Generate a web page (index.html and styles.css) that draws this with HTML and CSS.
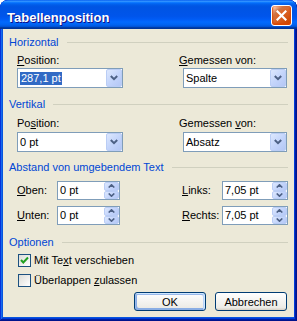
FILE: index.html
```html
<!DOCTYPE html>
<html lang="de">
<head>
<meta charset="UTF-8" />
<title>Tabellenposition</title>
<link rel="stylesheet" href="styles.css">
</head>
<body>
  <div class="window">
    <div class="titlebar">
      <span class="title">Tabellenposition</span>
      <button class="close" aria-label="Schließen">
        <svg width="11" height="11" viewBox="0 0 11 11"><path d="M1.5 1.5 L9.5 9.5 M9.5 1.5 L1.5 9.5" stroke="#fff" stroke-width="2.2" stroke-linecap="square" fill="none"/></svg>
      </button>
    </div>
    <div class="client">
      <div class="group-title first"><span>Horizontal</span></div>
      <div class="pair">
        <div class="field">
          <div class="label label-h"><u>P</u>osition:</div>
          <div class="combo combo-left">
            <span class="value"><span class="sel">287,1 pt</span></span>
            <span class="drop"><svg width="8" height="6" viewBox="0 0 8 6"><path d="M0.8 1 L4 4.2 L7.2 1" stroke="#4d6185" stroke-width="2" fill="none"/></svg></span>
          </div>
        </div>
        <div class="field">
          <div class="label label-h"><u>G</u>emessen von:</div>
          <div class="combo combo-right">
            <span class="value">Spalte</span>
            <span class="drop"><svg width="8" height="6" viewBox="0 0 8 6"><path d="M0.8 1 L4 4.2 L7.2 1" stroke="#4d6185" stroke-width="2" fill="none"/></svg></span>
          </div>
        </div>
      </div>

      <div class="group-title vert"><span>Vertikal</span></div>
      <div class="pair">
        <div class="field">
          <div class="label label-v">Po<u>s</u>ition:</div>
          <div class="combo combo-left combo-v">
            <span class="value">0 pt</span>
            <span class="drop"><svg width="8" height="6" viewBox="0 0 8 6"><path d="M0.8 1 L4 4.2 L7.2 1" stroke="#4d6185" stroke-width="2" fill="none"/></svg></span>
          </div>
        </div>
        <div class="field">
          <div class="label label-v">Gemessen <u>v</u>on:</div>
          <div class="combo combo-right combo-v">
            <span class="value">Absatz</span>
            <span class="drop"><svg width="8" height="6" viewBox="0 0 8 6"><path d="M0.8 1 L4 4.2 L7.2 1" stroke="#4d6185" stroke-width="2" fill="none"/></svg></span>
          </div>
        </div>
      </div>

      <div class="group-title dist"><span>Abstand von umgebendem Text</span></div>
      <div class="spin-row first-row">
        <span class="label"><u>O</u>ben:</span>
        <div class="spinner">
          <span class="value">0 pt</span>
          <span class="spin"><span class="up"><svg width="7" height="4" viewBox="0 0 7 4"><path d="M0.7 3.5 L3.5 0.8 L6.3 3.5" stroke="#4d6185" stroke-width="1.6" fill="none"/></svg></span><span class="down"><svg width="7" height="4" viewBox="0 0 7 4"><path d="M0.7 0.5 L3.5 3.2 L6.3 0.5" stroke="#4d6185" stroke-width="1.6" fill="none"/></svg></span></span>
        </div>
        <span></span>
        <span class="label"><u>L</u>inks:</span>
        <div class="spinner">
          <span class="value">7,05 pt</span>
          <span class="spin"><span class="up"><svg width="7" height="4" viewBox="0 0 7 4"><path d="M0.7 3.5 L3.5 0.8 L6.3 3.5" stroke="#4d6185" stroke-width="1.6" fill="none"/></svg></span><span class="down"><svg width="7" height="4" viewBox="0 0 7 4"><path d="M0.7 0.5 L3.5 3.2 L6.3 0.5" stroke="#4d6185" stroke-width="1.6" fill="none"/></svg></span></span>
        </div>
      </div>
      <div class="spin-row">
        <span class="label"><u>U</u>nten:</span>
        <div class="spinner">
          <span class="value">0 pt</span>
          <span class="spin"><span class="up"><svg width="7" height="4" viewBox="0 0 7 4"><path d="M0.7 3.5 L3.5 0.8 L6.3 3.5" stroke="#4d6185" stroke-width="1.6" fill="none"/></svg></span><span class="down"><svg width="7" height="4" viewBox="0 0 7 4"><path d="M0.7 0.5 L3.5 3.2 L6.3 0.5" stroke="#4d6185" stroke-width="1.6" fill="none"/></svg></span></span>
        </div>
        <span></span>
        <span class="label"><u>R</u>echts:</span>
        <div class="spinner">
          <span class="value">7,05 pt</span>
          <span class="spin"><span class="up"><svg width="7" height="4" viewBox="0 0 7 4"><path d="M0.7 3.5 L3.5 0.8 L6.3 3.5" stroke="#4d6185" stroke-width="1.6" fill="none"/></svg></span><span class="down"><svg width="7" height="4" viewBox="0 0 7 4"><path d="M0.7 0.5 L3.5 3.2 L6.3 0.5" stroke="#4d6185" stroke-width="1.6" fill="none"/></svg></span></span>
        </div>
      </div>

      <div class="group-title opts"><span>Optionen</span></div>
      <div class="check first-check">
        <span class="box"><svg width="11" height="11" viewBox="0 0 11 11"><path d="M2 5 L4.3 7.5 L9 2.5" stroke="#21a121" stroke-width="2" fill="none"/></svg></span>
        <span>Mit Te<u>x</u>t verschieben</span>
      </div>
      <div class="check">
        <span class="box"></span>
        <span>Überlappen <u>z</u>ulassen</span>
      </div>

      <div class="buttons">
        <button class="btn default">OK</button>
        <button class="btn">Abbrechen</button>
      </div>
    </div>
  </div>
</body>
</html>
```

FILE: styles.css
```css
body {
  margin: 0;
  font-family: "Liberation Sans", Arial, sans-serif;
  font-size: 11px;
  line-height: 13px;
  color: #000;
  background: #fff;
}
.window {
  width: 297px;
  height: 321px;
  display: flex;
  flex-direction: column;
  background: #0855dd;
  border-radius: 8px 8px 0 0;
  box-shadow: inset -1px -1px #00138c, inset 1px 1px #0831d9, inset -2px -2px #001ea0, inset 2px 2px #166aee, inset -3px -3px #003bda, inset 3px 3px #0855dd;
  overflow: hidden;
}
.titlebar {
  height: 29px;
  box-sizing: border-box;
  padding: 5px 5px 0 7px;
  display: flex;
  justify-content: space-between;
  align-items: flex-start;
  border-radius: 8px 8px 0 0;
  background: linear-gradient(180deg, #0058ee 0%, #3593ff 4%, #288eff 6%, #127dff 8%, #036ffc 10%, #0262ee 14%, #0057e5 20%, #0054e3 24%, #0055eb 56%, #005bf5 66%, #026afe 76%, #0062ef 86%, #0052d6 92%, #0040ab 94%, #003092 100%);
}
.title {
  font-weight: bold;
  font-size: 13px;
  line-height: 21px;
  padding-top: 2px;
  color: #fff;
  text-shadow: 1px 1px #0f1089;
}
.close {
  width: 21px;
  height: 21px;
  padding: 0;
  border: 1px solid #fff;
  border-radius: 3px;
  display: flex;
  align-items: center;
  justify-content: center;
  background: radial-gradient(circle at 90% 90%, #cc4600 0%, #dc6527 55%, #cd7546 70%, #ffccb2 90%, #fff 100%);
  box-shadow: inset 0 -1px 2px 1px #da4600;
}
.client {
  flex: 1;
  margin: 0 3px 4px 3px;
  padding: 7px 6px 0 6px;
  background: #ece9d8;
}
.group-title {
  display: flex;
  align-items: center;
  color: #0046d5;
}
.group-title::after {
  content: "";
  flex: 1;
  height: 1px;
  margin-left: 8px;
  background: #d0d0bf;
}
.group-title.vert { margin-top: 10px; }
.group-title.dist { margin-top: 9px; }
.group-title.opts { margin-top: 11px; }
.pair {
  display: grid;
  grid-template-columns: 162px 1fr;
  padding-left: 8px;
}
.label-h { margin-top: 5px; }
.label-v { margin-top: 6px; }
.combo, .spinner {
  height: 20px;
  box-sizing: border-box;
  border: 1px solid #7f9db9;
  background: #fff;
  display: flex;
  align-items: center;
  justify-content: space-between;
}
.combo { margin-top: 1px; }
.combo-v { margin-top: 2px; }
.combo-left { width: 106px; }
.combo-right { width: 104px; margin-left: 4px; }
.value {
  padding-left: 2px;
}
.sel {
  display: inline-block;
  background: #316ac5;
  color: #fff;
  padding: 0 1px;
}
.drop, .spin span {
  box-sizing: border-box;
  display: flex;
  align-items: center;
  justify-content: center;
  border: 1px solid #bacdf5;
  border-radius: 2px;
  background: linear-gradient(135deg, #dde8fe 0%, #c4d5fb 50%, #b4c7f5 100%);
}
.drop {
  width: 16px;
  height: 18px;
  margin-right: 0;
}
.spin-row {
  display: grid;
  grid-template-columns: 40px 63px 62px 40px 66px;
  align-items: center;
  padding-left: 8px;
  margin-top: 6px;
}
.spin-row.first-row { margin-top: 7px; }
.spinner { height: 19px; }
.spin {
  width: 15px;
  height: 17px;
  display: flex;
  flex-direction: column;
}
.spin span {
  flex: 1;
}
.check {
  display: flex;
  align-items: center;
  gap: 3px;
  padding-left: 9px;
  margin-top: 7px;
}
.check.first-check { margin-top: 5px; }
.box {
  width: 13px;
  height: 13px;
  box-sizing: border-box;
  border: 1px solid #1c5180;
  background: linear-gradient(135deg, #dcdcd7 0%, #fff 100%);
  display: flex;
  align-items: center;
  justify-content: center;
}
.buttons {
  display: flex;
  justify-content: flex-end;
  gap: 9px;
  margin-top: 5px;
  padding-right: 1px;
}
.btn {
  width: 72px;
  height: 19px;
  padding: 0;
  font-family: inherit;
  font-size: 11px;
  color: #000;
  border: 1px solid #003c74;
  border-radius: 3px;
  background: linear-gradient(180deg, #fff 0%, #ecebe6 86%, #d6d0c5 100%);
}
.btn.default {
  box-shadow: inset -1px 1px #cee7ff, inset 1px 2px #98b8ea, inset -2px 2px #bcd4f6, inset 1px -1px #89ade4, inset 2px -2px #89ade4;
}
```
